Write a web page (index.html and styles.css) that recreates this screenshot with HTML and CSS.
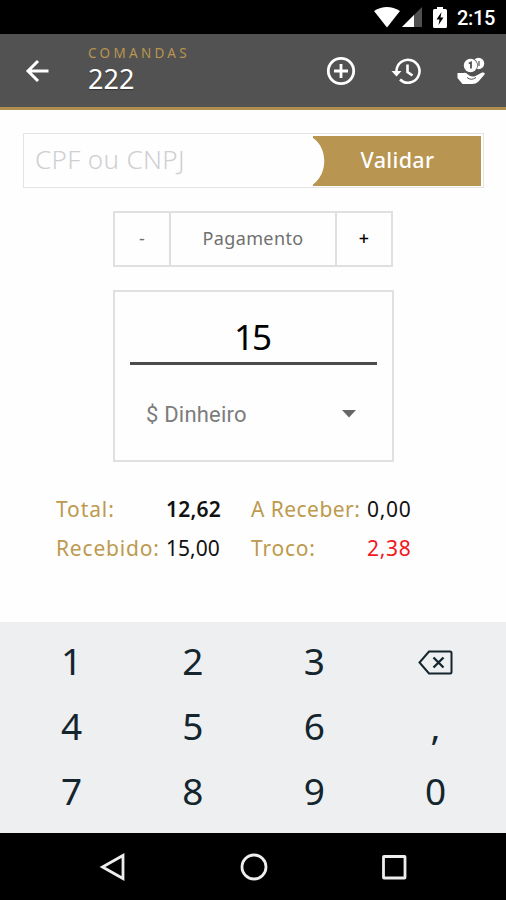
FILE: index.html
```html
<!DOCTYPE html>
<html lang="pt-BR">
<head>
<meta charset="utf-8">
<title>Comandas</title>
<link rel="stylesheet" href="styles.css">
</head>
<body>
<div class="status">
  <svg class="wifi" width="26" height="21" viewBox="0 0 26 21"><path d="M0 4Q13-4 26 4L13 20.500Z" fill="#fff"/></svg>
  <svg class="signal" width="20" height="20" viewBox="0 0 20 20"><path d="M20 0V20H0Z" fill="#505050"/><path d="M12 8V20H0Z" fill="#fff"/></svg>
  <svg class="battery" width="14" height="21" viewBox="0 0 14 21"><path d="M1.500 2H4V0H10V2H12.500Q14 2 14 3.500V19.500Q14 21 12.500 21H1.500Q0 21 0 19.500V3.500Q0 2 1.500 2Z" fill="#fff"/><path d="M8.500 5L3.500 12.500H6.500L5.500 18L10.500 10.500H7.500Z" fill="#000"/></svg>
  <span class="clock">2:15</span>
</div>
<header class="appbar">
  <svg class="back" width="24" height="24" viewBox="0 0 24 24" fill="none" stroke="#fff" stroke-width="3"><path d="M23.500 12H2.500M13 2L3 12L13 22"/></svg>
  <div class="heading"><div class="eyebrow">COMANDAS</div><h1>222</h1></div>
  <div class="actions">
    <svg width="30" height="30" viewBox="0 0 30 30" fill="none" stroke="#fff" stroke-width="2.800"><circle cx="15" cy="15" r="12.700"/><path d="M15 8V22M8 15H22"/></svg>
    <svg width="30" height="30" viewBox="0 0 30 30" fill="none" stroke="#fff" stroke-width="2.600"><path d="M5.500 15A11.500 11.500 0 1 1 9 23.500M16.500 8.500V16L21.500 19.500"/><path d="M.5 15H10.500L5.500 20.500Z" fill="#fff" stroke="none"/></svg>
    <svg width="30" height="30" viewBox="0 0 30 30"><circle cx="22.500" cy="7.500" r="5.700" fill="#fff"/><path d="M23 5V10" stroke="#525252" stroke-width="1.200"/><circle cx="14.500" cy="9.500" r="7.400" fill="#525252"/><circle cx="14.500" cy="9.500" r="6.700" fill="#fff"/><path d="M12.800 7.500L15 6.500V12.500" fill="none" stroke="#525252" stroke-width="1.800"/><path d="M1.500 17H7.500Q10 16 12 18.500Q15 21.500 19.500 20L26 16.500Q29.500 16 28.500 18.500L22.500 25.500Q20 28 16 28H6.500L1.500 22Z" fill="#fff"/><path d="M11 21.500Q15 25 20 21.500" fill="none" stroke="#525252" stroke-width="1"/></svg>
  </div>
</header>
<main>
  <div class="document">
    <span class="placeholder">CPF ou CNPJ</span>
    <div class="validate">
      <svg class="notch" width="12" height="50" viewBox="0 0 12 50"><path d="M0 0H12V50H0V48.500C15 38 15 12 0 2Z" fill="#b89550"/></svg>
      <span>Validar</span>
    </div>
  </div>
  <div class="stepper"><span class="minus">-</span><span class="mode">Pagamento</span><span class="plus">+</span></div>
  <section class="card">
    <div class="amount"><span>15</span></div>
    <div class="method"><span>$ Dinheiro</span><svg width="14" height="8" viewBox="0 0 14 8"><path d="M0 0H14L7 7.500Z" fill="#666"/></svg></div>
  </section>
  <div class="totals">
    <span class="label l1">Total:</span><span class="strong">12,62</span><span class="label l3">A Receber:</span><span class="short">0,00</span>
    <span class="label l2">Recebido:</span><span class="v">15,00</span><span class="label l4">Troco:</span><span class="short change">2,38</span>
  </div>
</main>
<div class="keypad">
  <span>1</span><span>2</span><span>3</span>
  <span class="erase"><svg width="35" height="25" viewBox="0 0 35 25" fill="none" stroke="#14252d"><path d="M11 1.500H32Q33.500 1.500 33.500 3V22Q33.500 23.500 32 23.500H11L1.500 12.500Z" stroke-width="2"/><path d="M15.500 7.500L25.500 17.500M25.500 7.500L15.500 17.500" stroke-width="2.300"/></svg></span>
  <span>4</span><span>5</span><span>6</span><span class="comma">,</span>
  <span>7</span><span>8</span><span>9</span><span>0</span>
</div>
<nav>
  <svg width="28" height="28" viewBox="0 0 28 28"><path d="M24 2.500V25.500L3.500 14Z"/></svg>
  <svg width="28" height="28" viewBox="0 0 28 28"><circle cx="14" cy="14" r="12"/></svg>
  <svg width="28" height="28" viewBox="0 0 28 28"><rect x="3.500" y="3.500" width="21.500" height="21.500" rx=".5"/></svg>
</nav>
</body>
</html>
```
FILE: styles.css
```css
* { box-sizing: border-box; }
body { margin: 0; width: 506px; height: 900px; overflow: hidden; display: flex; flex-direction: column; background: #fefefe; font-family: "Noto Sans", sans-serif; color: #111; }
svg { display: block; flex: none; }
.status { height: 34px; background: #000; color: #fff; display: flex; align-items: flex-start; padding: 7px 11px 0 0; justify-content: flex-end; flex: none; }
.signal { margin-left: 2px; }
.battery { margin-left: 11px; }
.clock { font: 500 20px/22px Roboto, sans-serif; margin-left: 10px; width: 38px; letter-spacing: -.3px; white-space: nowrap; }
.appbar { height: 76px; flex: none; background: #525252; border-bottom: 3px solid #b08e4e; display: flex; padding: 0 20px 0 25px; color: #fff; }
.back { margin-top: 25px; }
.heading { margin-left: 39px; padding-top: 9px; }
.eyebrow { font-size: 13.500px; line-height: 20px; letter-spacing: 3.300px; color: #b9954f; white-space: nowrap; }
h1 { margin: 0; font-size: 27px; line-height: 32px; font-weight: 400; text-shadow: 0 1px 1px #333; }
.actions { display: flex; gap: 35px; margin: 22px 0 0 auto; }
main { height: 512px; flex: none; padding-top: 23px; display: flex; flex-direction: column; }
.document { height: 55px; width: 461px; margin-left: 23px; border: 1.500px solid #e4e4e4; display: flex; justify-content: space-between; align-items: center; padding: 0 2px 0 11px; }
.placeholder { font-size: 26px; line-height: 36px; margin-bottom: 3px; font-weight: 350; color: #cfcfd3; letter-spacing: .35px; white-space: nowrap; }
.validate { width: 168px; height: 50px; display: flex; color: #fff; }
.validate span { flex: 1; background: #b89550; text-align: center; padding-right: 11px; line-height: 47px; font-size: 21.500px; font-weight: 500; letter-spacing: .35px; }
.stepper { width: 280px; height: 56px; margin: 23px 0 0 113px; border: 2px solid #e0e0e0; display: grid; grid-template-columns: 54px 1fr 54px; text-align: center; line-height: 51px; font-size: 18px; color: #707070; }
.mode { border: solid #dedede; border-width: 0 2px; letter-spacing: .4px; }
.plus { color: #000; font-weight: 500; }
.card { width: 281px; height: 172px; margin: 23px 0 0 113px; border: 2px solid #e0e0e0; padding: 14px 15px; }
.amount { height: 59px; border-bottom: 3px solid #4c4c4c; text-align: center; font-size: 35px; line-height: 61px; letter-spacing: -2px; padding-right: 3px; color: #000; }
.method { display: flex; align-items: center; justify-content: space-between; padding: 0 21px 0 16px; height: 98px; font: 22px Roboto, sans-serif; letter-spacing: .2px; color: #7c7c7c; }
.totals { display: grid; grid-template-columns: 110px 85px 116px 60px; grid-auto-rows: 39px; margin: 28px 0 0 56px; line-height: 39px; font-size: 21px; white-space: nowrap; }
.label { color: #bd9a4e; }
.l1 { letter-spacing: .9px; }
.l2 { letter-spacing: .8px; }
.l3 { letter-spacing: .45px; }
.l4 { letter-spacing: .8px; }
.short { letter-spacing: .7px; }
.strong { font-weight: 600; letter-spacing: .2px; }
.change { color: #f21820; }
.keypad { height: 211px; flex: none; background: #edeff1; display: grid; grid-template-columns: repeat(4, 121.300px); grid-auto-rows: 65px; padding: 8px 11px; color: #14252d; font-size: 37px; }
.keypad span { display: flex; align-items: center; justify-content: center; line-height: 62px; padding-bottom: 3px; }
.keypad .erase { padding-bottom: 0; }
nav { height: 67px; flex: none; background: #000; display: flex; align-items: center; justify-content: space-between; padding: 0 98px 0 99px; }
nav svg { fill: none; stroke: #eee; stroke-width: 2.800; }
```
